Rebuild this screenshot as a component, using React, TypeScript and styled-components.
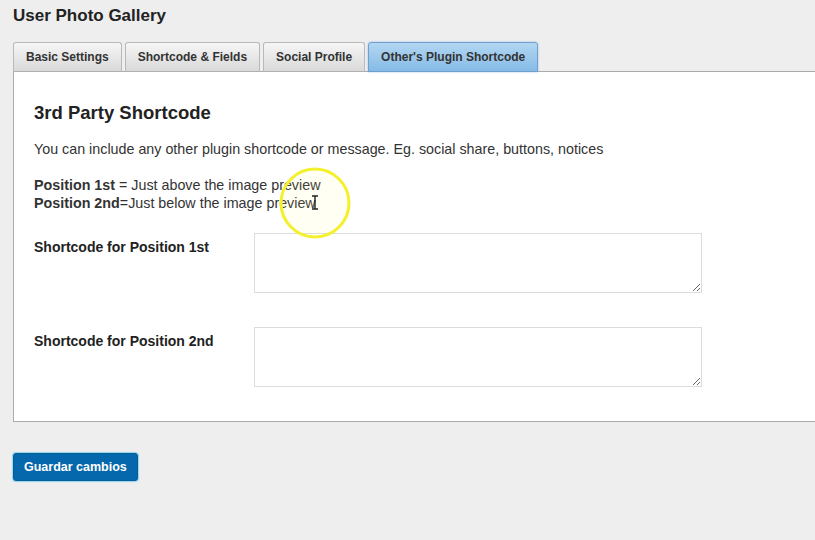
import React, { useState } from 'react'
import styled, { createGlobalStyle } from 'styled-components'

const GlobalStyle = createGlobalStyle`
  html, body {
    margin: 0;
    padding: 0;
    background: #eeeeee;
    font-family: 'Liberation Sans', Arial, sans-serif;
    color: #222;
    overflow: hidden;
  }
`

const tabs = ['Basic Settings', 'Shortcode & Fields', 'Social Profile', "Other's Plugin Shortcode"]

export default function App() {
  const [active, setActive] = useState(3)

  return (
    <>
      <GlobalStyle />
      <Page>
        <Title>User Photo Gallery</Title>
        <TabBar>
          {tabs.map((t, i) => (
            <Tab key={t} $active={i === active} onClick={() => setActive(i)}>
              {t}
            </Tab>
          ))}
        </TabBar>
        <Panel>
          <Heading>3rd Party Shortcode</Heading>
          <Intro>
            You can include any other plugin shortcode or message. Eg. social share, buttons, notices
          </Intro>
          <Positions>
            <strong>Position 1st</strong> = Just above the image preview
            <br />
            <strong>Position 2nd</strong>=Just below the image preview
          </Positions>
          <FormRow>
            <Label>Shortcode for Position 1st</Label>
            <TextArea />
          </FormRow>
          <FormRow>
            <Label>Shortcode for Position 2nd</Label>
            <TextArea />
          </FormRow>
        </Panel>
        <SaveButton type='button'>Guardar cambios</SaveButton>
        <CursorMark width='74' height='74' viewBox='0 0 74 74'>
          <circle cx='37' cy='37' r='34' fill='rgba(255,255,120,0.08)' stroke='#f4f02c' strokeWidth='3' />
          <path d='M34 30h6M37 30v13M34 43h6' stroke='#222' strokeWidth='1.4' fill='none' />
        </CursorMark>
      </Page>
    </>
  )
}

const Page = styled.div`
  position: relative;
  padding: 6px 0 60px 13px;
`
const Title = styled.h1`
  margin: 0;
  font-size: 17px;
  line-height: 19px;
  font-weight: 700;
  color: #222;
`
const TabBar = styled.div`
  display: flex;
  gap: 3px;
  margin-top: 17px;
  position: relative;
  z-index: 1;
`
const Tab = styled.button<{ $active: boolean }>`
  height: 30px;
  margin-bottom: -1px;
  padding: 0 12px;
  font-family: inherit;
  font-size: 12px;
  font-weight: 700;
  color: #333;
  border: 1px solid ${(p) => (p.$active ? '#6f9fcc' : '#b9b9b9')};
  border-bottom-color: ${(p) => (p.$active ? '#6f9fcc' : '#b0b0b0')};
  border-radius: 3px 3px 0 0;
  background: ${(p) =>
    p.$active
      ? 'linear-gradient(#b2d6f2, #86bbe6)'
      : 'linear-gradient(#f6f6f6, #d9d9d9)'};
  box-shadow: ${(p) => (p.$active ? '0 0 2px rgba(80,150,220,0.6)' : 'none')};
  cursor: pointer;
`
const Panel = styled.div`
  background: #fff;
  border: 1px solid #ababab;
  border-right: none;
  padding: 30px 20px 34px;
  margin-right: -20px;
`
const Heading = styled.h2`
  margin: 0;
  font-size: 18.5px;
  line-height: 22px;
  font-weight: 700;
  color: #222;
`
const Intro = styled.p`
  margin: 16px 0 0;
  font-size: 14.3px;
  line-height: 18px;
  color: #333;
`
const Positions = styled.p`
  margin: 18px 0 0;
  font-size: 14.3px;
  line-height: 18px;
  color: #333;
`
const FormRow = styled.div`
  display: grid;
  grid-template-columns: 220px 448px;
  align-items: start;
  margin-top: 21px;
  & + & {
    margin-top: 34px;
  }
`
const Label = styled.label`
  font-size: 14px;
  line-height: 18px;
  font-weight: 700;
  color: #222;
  padding-top: 5px;
`
const TextArea = styled.textarea`
  box-sizing: border-box;
  width: 448px;
  height: 60px;
  border: 1px solid #dcdcdc;
  background: #fff;
  margin: 0;
  padding: 4px;
  font-family: inherit;
  resize: vertical;
  outline: none;
`
const SaveButton = styled.button`
  margin-top: 31px;
  height: 28px;
  padding: 0 10px;
  font-family: inherit;
  font-size: 12.5px;
  font-weight: 700;
  color: #fff;
  background: #0568ac;
  border: 1px solid #035d99;
  border-radius: 3px;
  box-shadow: 0 0 1px 1px rgba(60, 190, 240, 0.5);
  cursor: pointer;
`
const CursorMark = styled.svg`
  position: absolute;
  left: 278px;
  top: 166px;
  pointer-events: none;
`
